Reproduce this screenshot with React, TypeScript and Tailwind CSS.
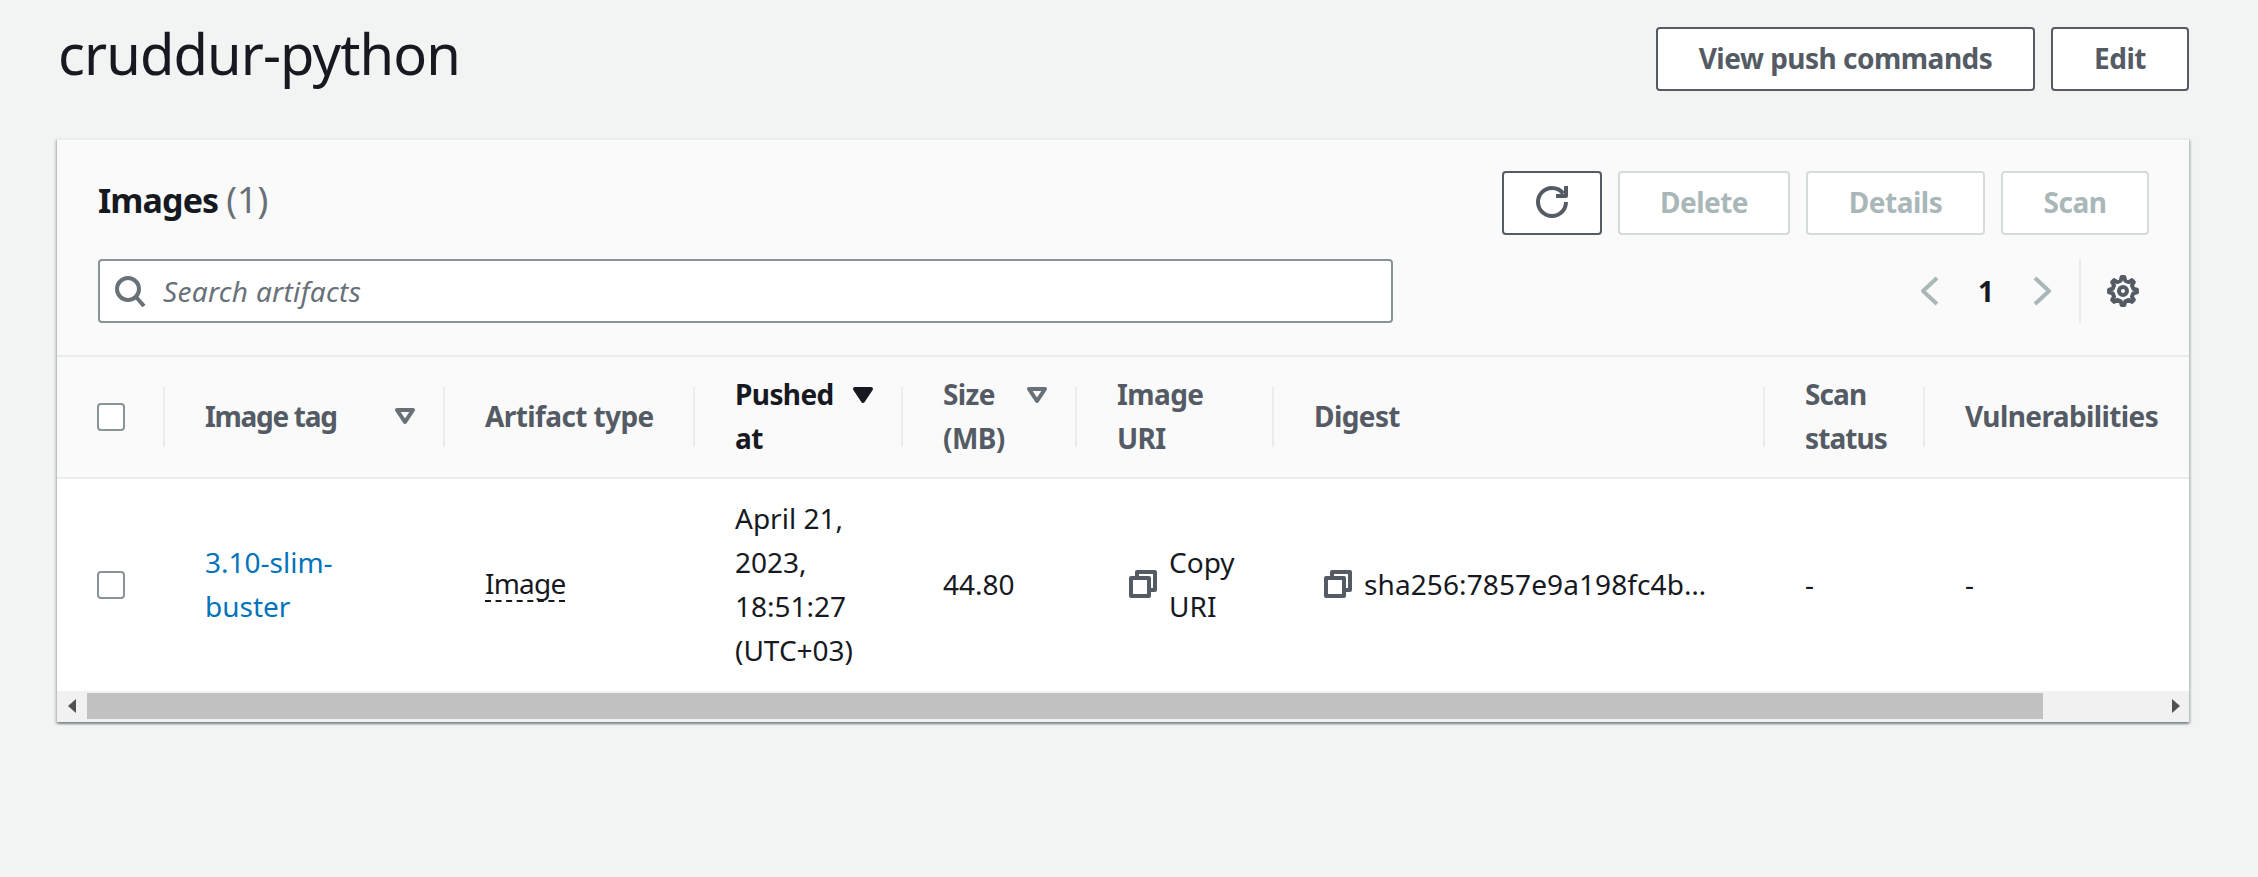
import React from "react";

const gearPath = (() => {
  const teeth = 8;
  const pts: string[] = [];
  for (let i = 0; i < teeth; i++) {
    const a = (i * 2 * Math.PI) / teeth - Math.PI / 2;
    const step = (2 * Math.PI) / teeth;
    const list: [number, number][] = [
      [5.3, a - step * 0.27],
      [7, a - step * 0.13],
      [7, a + step * 0.13],
      [5.3, a + step * 0.27],
    ];
    for (const [r, t] of list) pts.push(`${(8 + r * Math.cos(t)).toFixed(2)} ${(8 + r * Math.sin(t)).toFixed(2)}`);
  }
  return "M" + pts.join("L") + "Z";
})();

function Ico({ children, className = "" }: { children: React.ReactNode; className?: string }) {
  return (
    <svg viewBox="0 0 16 16" fill="none" stroke="currentColor" strokeWidth={2} strokeLinejoin="round" className={`w-8 h-8 shrink-0 ${className}`}>
      {children}
    </svg>
  );
}

const CopyIcon = () => (
  <Ico className="text-[#545b64]">
    <path d="M2 5h9v9H2z" />
    <path d="M5 5V2h9v9h-3" />
  </Ico>
);

function Caret({ active = false }: { active?: boolean }) {
  return (
    <svg viewBox="0 0 16 16" strokeWidth={2} strokeLinejoin="round" stroke="currentColor" fill={active ? "currentColor" : "none"} className={`w-8 h-8 shrink-0 ${active ? "text-[#16191f]" : "text-[#687078]"}`}>
      <path d="M4 5h8l-4 6-4-6z" />
    </svg>
  );
}

function Btn({ children, w, disabled = false }: { children: React.ReactNode; w: string; disabled?: boolean }) {
  return (
    <button className={`${w} h-[64px] pb-[2px] flex items-center justify-center bg-white rounded-[4px] border-2 text-[28px] font-bold tracking-[-0.5px] leading-[44px] ${disabled ? "border-[#d5dbdb] text-[#aab7b8]" : "border-[#545b64] text-[#545b64]"}`}>
      {children}
    </button>
  );
}

const Checkbox = () => <div className="w-[28px] h-[28px] bg-white border-2 border-[#879596] rounded-[4px]" />;

function Head({ children, caret, active = false }: { children?: React.ReactNode; caret?: "mid" | "top"; active?: boolean }) {
  return (
    <div className="h-[120px] flex items-center min-w-0">
      <div className={`h-[60px] w-full border-l-2 border-[#eaeded] pl-[40px] flex justify-between pr-[22px] ${caret === "top" ? "items-start" : "items-center pb-[2px]"} ${active ? "text-[#16191f]" : "text-[#545b64]"}`}>
        <div className={caret === "top" ? "-mt-[15px] w-min shrink-0" : "shrink-0"}>{children}</div>
        {caret && <div className={caret === "top" ? "-mt-[8px]" : ""}><Caret active={active} /></div>}
      </div>
    </div>
  );
}

const Cell = ({ children }: { children: React.ReactNode }) => (
  <div className="h-[212px] pb-[2px] flex items-center pl-[42px] min-w-0">{children}</div>
);

export default function App() {
  return (
    <div className="min-h-screen bg-[#f2f3f3] pl-[57px] pr-[69px] pt-[27px] text-[#16191f] text-[28px] leading-[44px] font-['Noto_Sans',sans-serif]">
      <div className="flex items-start justify-between h-[64px]">
        <h1 className="text-[56px] leading-[52px] font-normal tracking-[-0.9px] pl-[1px]">cruddur-python</h1>
        <div className="flex gap-[16px]">
          <Btn w="w-[379px]">View push commands</Btn>
          <Btn w="w-[138px]">Edit</Btn>
        </div>
      </div>

      <div className="mt-[47px] bg-white overflow-hidden border-t-2 border-[#eaeded] shadow-[0_2px_2px_0_rgba(0,28,36,0.3),2px_2px_2px_0_rgba(0,28,36,0.15),-2px_2px_2px_0_rgba(0,28,36,0.15)]">
        <div className="bg-[#fafafa] pl-[41px] pr-[40px] pt-[31px] border-b-2 border-[#eaeded] h-[217px]">
          <div className="flex items-center justify-between h-[64px]">
            <h2 className="text-[34px] leading-[44px] font-bold -mt-[7px] tracking-[-0.9px]">
              Images <span className="font-normal text-[36px] text-[#687078] tracking-normal">(1)</span>
            </h2>
            <div className="flex gap-[16px]">
              <Btn w="w-[100px]">
                <Ico className="text-[#545b64]">
                  <path d="M10 5h5V0" />
                  <path d="M15 8a6.99 6.99 0 0 1-7 7 6.99 6.99 0 0 1-7-7 6.99 6.99 0 0 1 7-7c2.27 0 4.33 1.08 5.61 2.77" />
                </Ico>
              </Btn>
              <Btn w="w-[172px]" disabled>Delete</Btn>
              <Btn w="w-[179px]" disabled>Details</Btn>
              <Btn w="w-[148px]" disabled>Scan</Btn>
            </div>
          </div>
          <div className="mt-[24px] flex items-center justify-between h-[64px]">
            <div className="w-[1295px] h-[64px] bg-white border-2 border-[#879596] rounded-[4px] flex items-center pl-[14px] gap-[17px]">
              <Ico className="text-[#687078]">
                <circle cx="7" cy="7" r="5.5" />
                <path d="M11 11l4 4.5" />
              </Ico>
              <span className="italic text-[#687078] tracking-[0.3px]">Search artifacts</span>
            </div>
            <div className="flex items-center pr-[10px]">
              <Ico className="text-[#aab7b8]"><path d="M12 1.5 5 8l7 6.5" /></Ico>
              <span className="w-[40px] mx-[21px] text-center font-bold">1</span>
              <Ico className="text-[#aab7b8]"><path d="M4 1.5 11 8l-7 6.5" /></Ico>
              <div className="ml-[20px] h-[64px] border-l-2 border-[#eaeded] pl-[26px] flex items-center">
                <Ico className="text-[#545b64]">
                  <path d={gearPath} />
                  <circle cx="8" cy="8" r="2" />
                </Ico>
              </div>
            </div>
          </div>
        </div>

        <div className="grid grid-cols-[106px_280px_250px_208px_174px_197px_491px_160px_330px] font-bold tracking-[-0.6px] bg-[#fafafa] border-b-2 border-[#eaeded]">
          <div className="h-[120px] flex items-center pl-[40px]"><Checkbox /></div>
          <Head caret="mid"><span className="tracking-[-1.3px]">Image tag</span></Head>
          <Head>Artifact type</Head>
          <Head caret="top" active>Pushed at</Head>
          <Head caret="top">Size (MB)</Head>
          <Head><div className="w-min">Image URI</div></Head>
          <Head>Digest</Head>
          <Head><div className="w-min tracking-[-0.9px]">Scan status</div></Head>
          <Head>Vulnerabilities</Head>
        </div>

        <div className="grid grid-cols-[106px_280px_250px_208px_174px_197px_491px_160px_330px] bg-white">
          <div className="h-[212px] flex items-center pl-[40px]"><Checkbox /></div>
          <Cell><a className="text-[#0073bb] w-[180px]">3.10-slim-buster</a></Cell>
          <Cell><span className="border-b-2 border-dashed border-[#16191f] leading-[34px] tracking-[-0.8px]">Image</span></Cell>
          <Cell><span className="w-[150px]">April 21, 2023, 18:51:27 (UTC+03)</span></Cell>
          <Cell>44.80</Cell>
          <Cell>
            <div className="-ml-[32px] pl-[42px] flex items-center gap-[10px]">
              <CopyIcon />
              <span className="w-[80px]">Copy URI</span>
            </div>
          </Cell>
          <Cell>
            <div className="-ml-[34px] pl-[42px] flex items-center gap-[10px]">
              <CopyIcon />
              <span className="whitespace-nowrap tracking-[0.1px]">sha256:7857e9a198fc4b…</span>
            </div>
          </Cell>
          <Cell>-</Cell>
          <Cell>-</Cell>
        </div>

        <div className="h-[31px] bg-[#f1f1f1] flex items-center pb-[2px]">
          <div className="w-[30px] flex justify-center">
            <div className="w-0 h-0 border-y-[7px] border-y-transparent border-r-[8px] border-r-[#505050]" />
          </div>
          <div className="w-[1956px] h-[26px] bg-[#c1c1c1]" />
          <div className="flex-1 flex justify-end pr-[9px]">
            <div className="w-0 h-0 border-y-[7px] border-y-transparent border-l-[8px] border-l-[#505050]" />
          </div>
        </div>
      </div>
    </div>
  );
}
